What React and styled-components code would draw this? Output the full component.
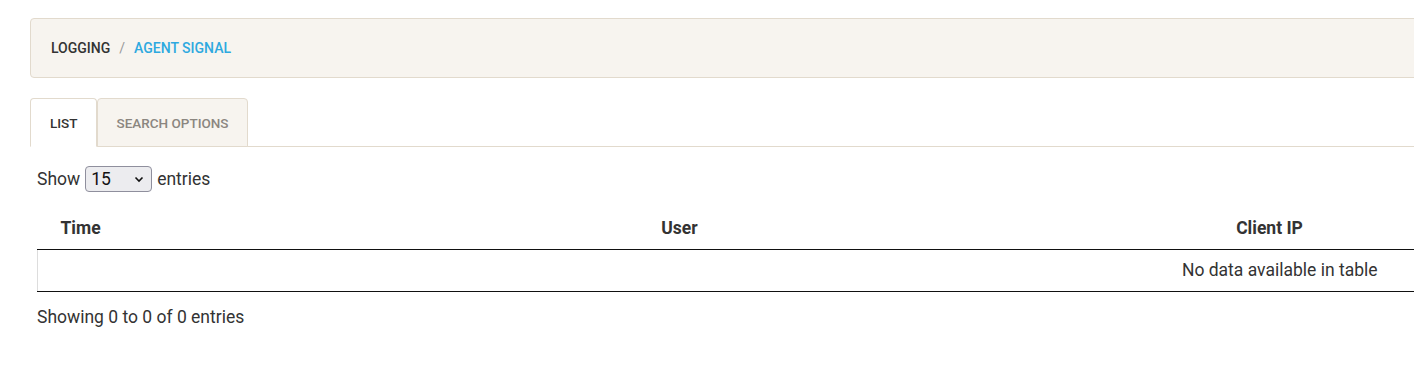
import React from "react";
import styled, { createGlobalStyle } from "styled-components";

const Global = createGlobalStyle`
  html, body { margin: 0; padding: 0; background: #fff; }
  body { font-family: Roboto, "Liberation Sans", Arial, sans-serif; color: #333; font-size: 17.5px; }
`;

const Page = styled.div`
  width: 2600px;
  padding: 18px 0 40px 30px;
  box-sizing: border-box;
`;

const Breadcrumb = styled.nav`
  display: flex;
  align-items: center;
  gap: 9px;
  height: 60px;
  box-sizing: border-box;
  padding: 0 20px 1px 20px;
  background: #f7f4ef;
  border: 1px solid #e2dacd;
  border-radius: 4px;
  font-size: 14px;
  font-weight: 500;
  text-transform: uppercase;
`;

const Crumb = styled.span`
  color: ${(p) => (p.$active ? "#2ea9df" : "#333")};
`;

const Sep = styled.span`
  color: #999;
  font-weight: 400;
`;

const Tabs = styled.div`
  display: flex;
  margin-top: 20px;
  border-bottom: 1px solid #e2dacd;
`;

const Tab = styled.div`
  height: 49px;
  box-sizing: border-box;
  display: flex;
  align-items: center;
  padding: 0 18px 0 19px;
  margin-bottom: -1px;
  border: 1px solid #e2dacd;
  border-bottom-color: ${(p) => (p.$active ? "#fff" : "#e2dacd")};
  border-radius: 4px 4px 0 0;
  background: ${(p) => (p.$active ? "#fff" : "#f7f4ef")};
  color: ${(p) => (p.$active ? "#333" : "#8b8680")};
  font-size: 13.5px;
  font-weight: 500;
  text-transform: uppercase;
`;

const Content = styled.div`
  padding: 19px 0 0 7px;
`;

const LengthRow = styled.div`
  display: flex;
  align-items: center;
  gap: 5px;
  height: 26px;
  margin-bottom: 15px;
  line-height: 24px;
`;

const SelectWrap = styled.span`
  position: relative;
  display: inline-flex;
`;

const Select = styled.select`
  appearance: none;
  width: 67px;
  height: 26px;
  box-sizing: border-box;
  padding: 0 0 0 5px;
  font-family: Roboto, "Liberation Sans", Arial, sans-serif;
  font-size: 17.5px;
  color: #111;
  background: #ececef;
  border: 1px solid #8f8f9d;
  border-radius: 4px;
`;

const Chevron = styled.svg`
  position: absolute;
  right: 8px;
  top: 10px;
  pointer-events: none;
`;

const Table = styled.table`
  width: 2484px;
  border-collapse: collapse;
  table-layout: fixed;
`;

const Th = styled.th`
  padding: 10px 18px 10px ${(p) => (p.$left ? "23px" : "18px")};
  text-align: ${(p) => (p.$left ? "left" : "center")};
  font-size: 17.5px;
  font-weight: 700;
  line-height: 22px;
  border-bottom: 1px solid #111;
  color: #333;
`;

const Td = styled.td`
  padding: 8px 10px;
  line-height: 25px;
  text-align: center;
  border-left: 1px solid #ddd;
  border-bottom: 1px solid #111;
`;

const Info = styled.div`
  padding-top: 13px;
  line-height: 24px;
`;

export default function App() {
  return (
    <>
      <Global />
      <Page>
        <Breadcrumb>
          <Crumb>Logging</Crumb>
          <Sep>/</Sep>
          <Crumb $active>Agent Signal</Crumb>
        </Breadcrumb>
        <Tabs>
          <Tab $active>List</Tab>
          <Tab>Search Options</Tab>
        </Tabs>
        <Content>
          <LengthRow>
            Show
            <SelectWrap>
              <Select defaultValue="15">
                <option>10</option>
                <option>15</option>
                <option>25</option>
                <option>50</option>
                <option>100</option>
              </Select>
              <Chevron width="10" height="7" viewBox="0 0 10 7">
                <path d="M1.5 1.5 L5 5 L8.5 1.5" fill="none" stroke="#111" strokeWidth="1.6" />
              </Chevron>
            </SelectWrap>
            entries
          </LengthRow>
          <Table>
            <colgroup>
              <col style={{ width: 180 }} />
              <col style={{ width: 924 }} />
              <col style={{ width: 256 }} />
              <col style={{ width: 560 }} />
              <col style={{ width: 564 }} />
            </colgroup>
            <thead>
              <tr>
                <Th $left>Time</Th>
                <Th>User</Th>
                <Th>Client IP</Th>
                <Th />
                <Th />
              </tr>
            </thead>
            <tbody>
              <tr>
                <Td colSpan={5}>No data available in table</Td>
              </tr>
            </tbody>
          </Table>
          <Info>Showing 0 to 0 of 0 entries</Info>
        </Content>
      </Page>
    </>
  );
}
